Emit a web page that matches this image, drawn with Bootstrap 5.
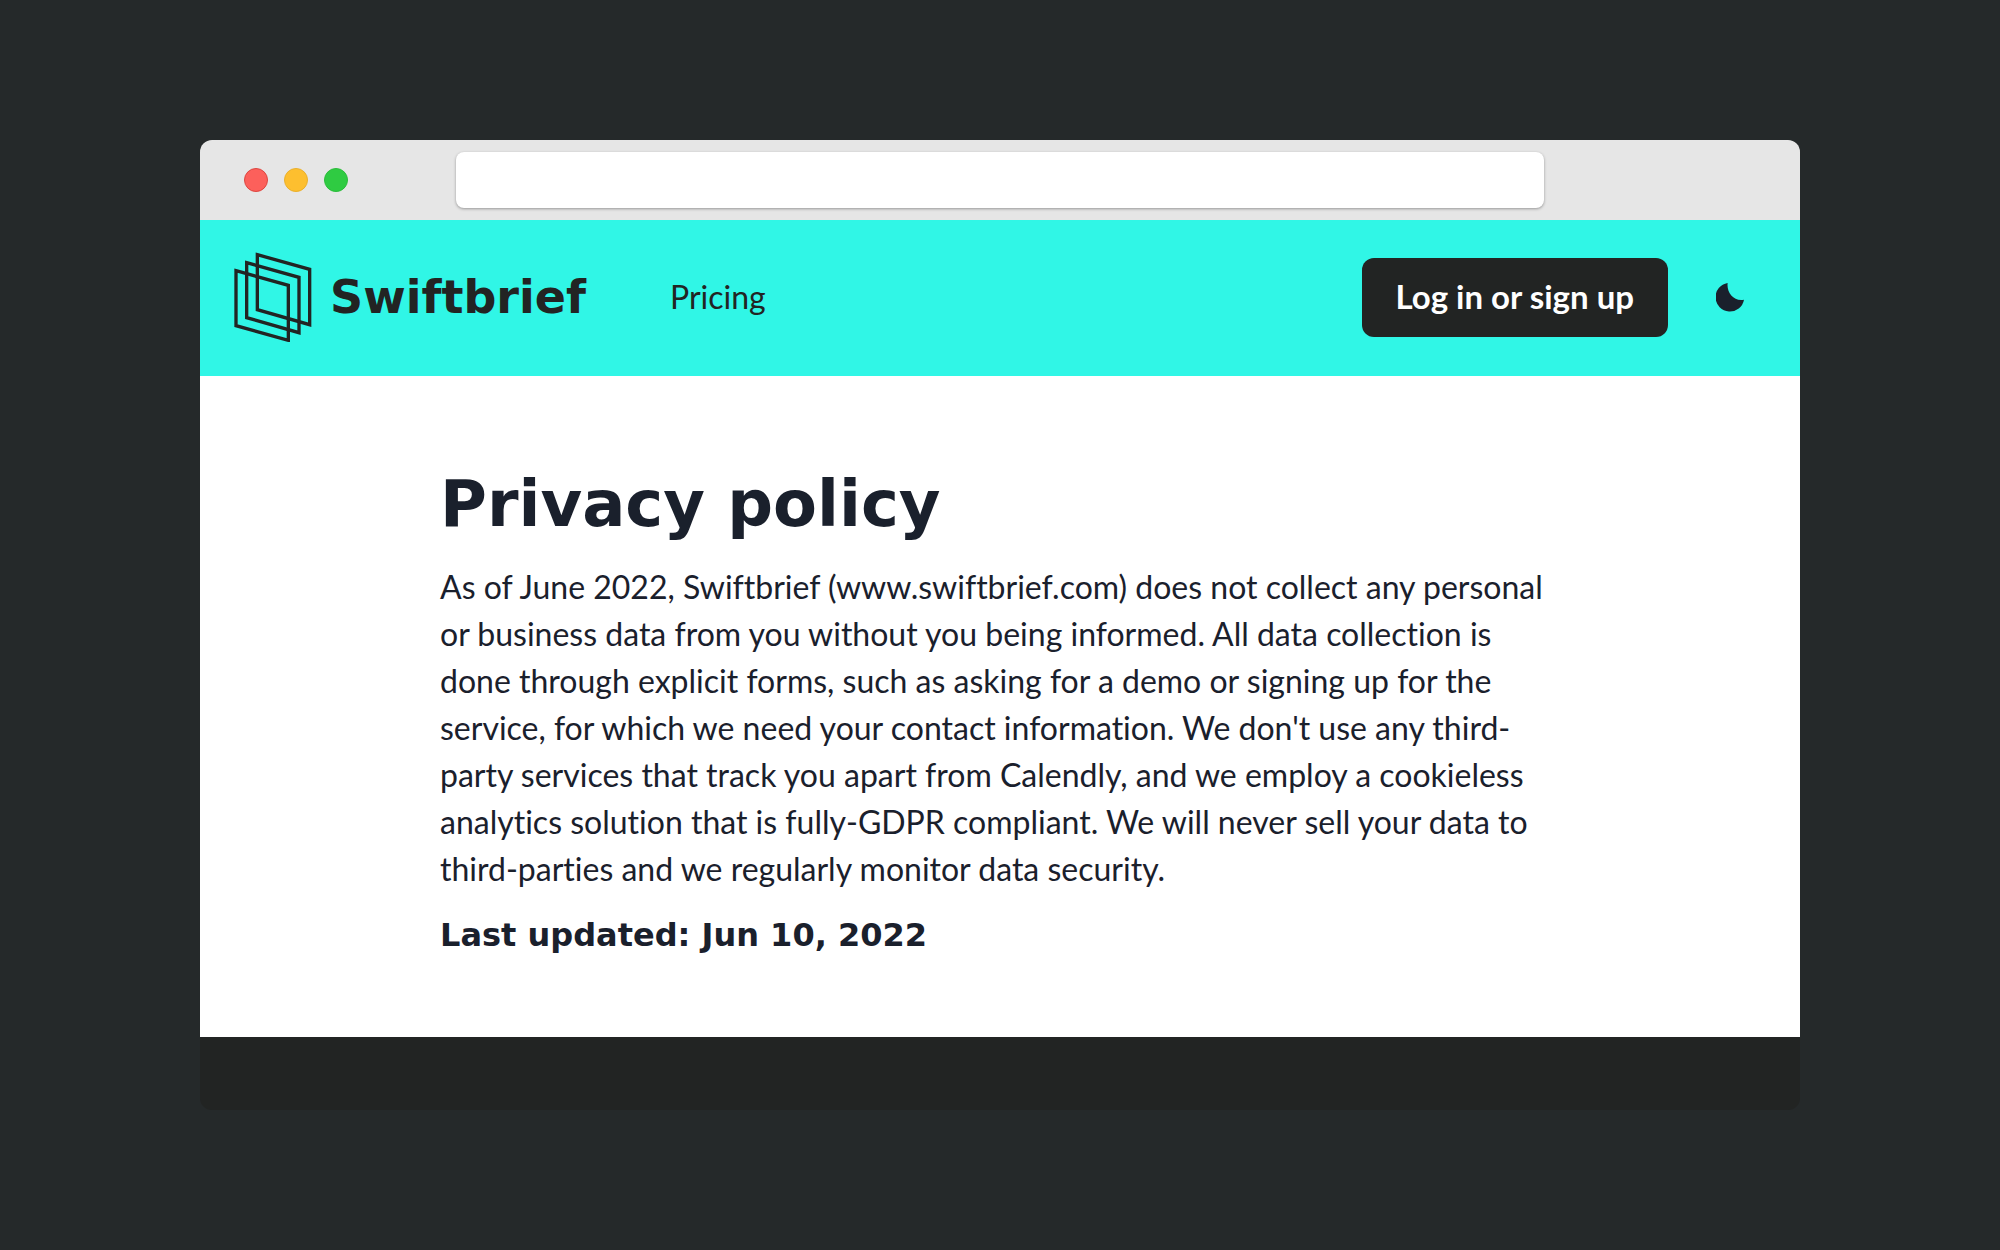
<!DOCTYPE html>
<html lang="en">
<head>
<meta charset="utf-8">
<meta name="viewport" content="width=device-width, initial-scale=1">
<title>Swiftbrief – Privacy policy</title>
<link href="https://cdn.jsdelivr.net/npm/bootstrap@5.3.0/dist/css/bootstrap.min.css" rel="stylesheet">
<style>
  body { background: #25292a; color: #1a202c; font-family: Lato, "Open Sans", sans-serif; font-size: 32px; line-height: 47px; font-variant-ligatures: none; }
  .browser { width: 80%; border-radius: 12px; background: #222423; }
  .titlebar { height: 80px; background: #e6e6e6; }
  .light { width: 24px; height: 24px; border: 1px solid; }
  .light-close { background: #fc605b; border-color: #dc4640; }
  .light-min { background: #fdbf2f; border-color: #eab02c; }
  .light-max { background: #2fcb42; border-color: #2bbd3b; }
  .lights-col { width: 16%; padding-left: 44px; }
  .address { width: 68%; height: 56px; border: 0; border-radius: 8px; background: #fff; box-shadow: 0 1px 3px rgba(0, 0, 0, .35); }
  .site-nav { background: #30f6e6; min-height: 156px; padding: 0 48px 2px 34px; }
  .logo-link, .logo-link:hover { color: #222423; gap: 18px; }
  .display-face { font-family: "DejaVu Sans", sans-serif; font-weight: 700; }
  .wordmark { font-size: 46px; }
  .pricing-link, .pricing-link:hover { color: #222423; margin-left: 84px; padding-bottom: 2px; }
  .login-btn, .login-btn:hover { background: #222423; color: #fff; font-size: 33px; font-weight: 700; line-height: 47px; padding: 15px 34px 17px; border: 0; border-radius: 12px; }
  .nav-actions { gap: 40px; }
  .theme-btn { color: #1a202c; line-height: 0; padding: 8px; border: 0; }
  .policy { padding: 91px 15% 83px; }
  .policy h1 { font-size: 64px; line-height: 74px; margin-bottom: 22px; }
  .policy p { margin-bottom: 24px; }
  .policy h2 { font-size: 32px; line-height: 38px; margin-bottom: 0; }
  .site-footer { height: 73px; }
</style>
<script src="https://cdn.jsdelivr.net/npm/bootstrap@5.3.0/dist/js/bootstrap.bundle.min.js"></script>
</head>
<body class="min-vh-100 d-flex align-items-center justify-content-center">
<div class="browser overflow-hidden">
  <div class="titlebar d-flex align-items-center">
    <div class="lights-col d-flex gap-3">
      <span class="light light-close rounded-circle"></span>
      <span class="light light-min rounded-circle"></span>
      <span class="light light-max rounded-circle"></span>
    </div>
    <input class="address" type="text" aria-label="Address">
  </div>
  <header class="site-nav d-flex align-items-center">
    <a class="logo-link d-flex align-items-center text-decoration-none" href="#">
      <svg width="78" height="90" viewBox="27 22 234 270" fill="none" stroke="#222423" stroke-width="10" aria-hidden="true">
        <path d="M97 30 254 74V240L97 195Z"/>
        <path d="M65 54 222 98V264L65 219Z"/>
        <path d="M33 78 190 122V287L33 243Z"/>
      </svg>
      <span class="wordmark display-face">Swiftbrief</span>
    </a>
    <nav><a class="pricing-link d-block text-decoration-none" href="#">Pricing</a></nav>
    <div class="nav-actions ms-auto d-flex align-items-center">
      <button class="btn login-btn" type="button">Log in or sign up</button>
      <button class="btn theme-btn" type="button" aria-label="Switch to dark mode">
        <svg width="28" height="29" viewBox="78 40 84 87" fill="currentColor" aria-hidden="true"><path d="M113 40A43 43 0 1 0 162 90C131 96 109 68 113 40Z"/></svg>
      </button>
    </div>
  </header>
  <main class="policy bg-white">
    <h1 class="display-face">Privacy policy</h1>
    <p>As of June 2022, Swiftbrief (www.swiftbrief.com) does not collect any personal or business data from you without you being informed. All data collection is done through explicit forms, such as asking for a demo or signing up for the service, for which we need your contact information. We don't use any third-party services that track you apart from Calendly, and we employ a cookieless analytics solution that is fully-GDPR compliant. We will never sell your data to third-parties and we regularly monitor data security.</p>
    <h2 class="display-face">Last updated: Jun 10, 2022</h2>
  </main>
  <footer class="site-footer"></footer>
</div>
</body>
</html>
